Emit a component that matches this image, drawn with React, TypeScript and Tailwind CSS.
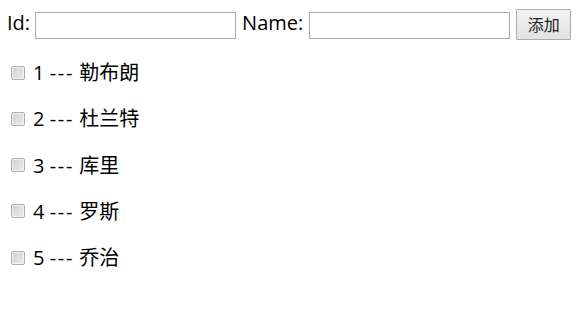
import { useState } from "react";

type Person = { id: number; name: string };

const initial: Person[] = [
  { id: 1, name: "勒布朗" },
  { id: 2, name: "杜兰特" },
  { id: 3, name: "库里" },
  { id: 4, name: "罗斯" },
  { id: 5, name: "乔治" },
];

export default function App() {
  const [list, setList] = useState<Person[]>(initial);
  const [id, setId] = useState("");
  const [name, setName] = useState("");

  const add = () => {
    if (!id || !name) return;
    setList((prev) => [...prev, { id: Number(id), name }]);
    setId("");
    setName("");
  };

  return (
    <div
      className="min-h-[320px] w-[586px] bg-white pl-[7px] pt-[9px] text-[20px] leading-[26px] text-black"
      style={{ fontFamily: '"Open Sans", "Noto Sans CJK SC", sans-serif' }}
    >
      <div className="flex items-start">
        <span className="mt-[1px]">Id:</span>
        <input
          value={id}
          onChange={(e) => setId(e.target.value)}
          className="ml-[5px] mt-[3px] h-[27px] w-[201px] border border-[#a9a9a9] bg-white px-1 text-[16px] outline-none"
        />
        <span className="ml-[6px] mt-[1px]">Name:</span>
        <input
          value={name}
          onChange={(e) => setName(e.target.value)}
          className="ml-[6px] mt-[3px] h-[27px] w-[201px] border border-[#a9a9a9] bg-white px-1 text-[16px] outline-none"
        />
        <button
          onClick={add}
          className="ml-[6px] h-[31px] w-[55px] rounded-[1px] border border-[#acacac] bg-gradient-to-b from-[#f2f2f2] to-[#e2e2e2] text-[16px] leading-[20px] text-[#222]"
        >
          添加
        </button>
      </div>

      <div className="mt-[20px] flex flex-col gap-[20.25px]">
        {list.map((p) => (
          <p key={p.id} className="flex items-center">
            <input
              type="checkbox"
              className="ml-[4px] mr-[8px] mt-[-1px] h-[14px] w-[14px] appearance-none rounded-[2px] border border-[#adadad] bg-gradient-to-br from-[#d2d2d2] to-[#ebebeb] shadow-[inset_0_0_0_1px_#f2f2f2]"
            />
            <span>
              {p.id} <span className="tracking-[1.7px]">---</span> {p.name}
            </span>
          </p>
        ))}
      </div>
    </div>
  );
}
